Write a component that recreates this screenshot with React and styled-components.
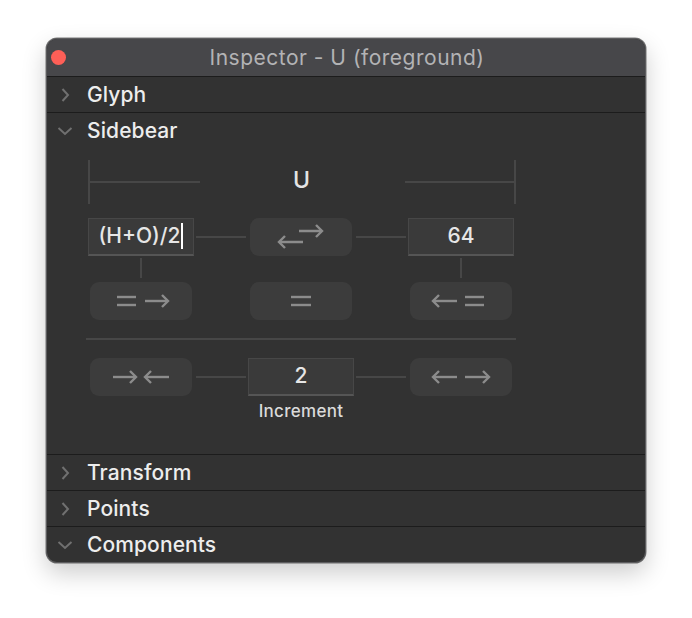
import React from 'react'
import styled, { createGlobalStyle } from 'styled-components'

const GlobalStyle = createGlobalStyle`
  html, body {
    margin: 0;
    padding: 0;
    background: #ffffff;
  }
  body {
    font-family: Inter, "Liberation Sans", sans-serif;
  }
`

const Page = styled.div`
  padding: 38px 46px 40px;
`

const Window = styled.div`
  width: 600px;
  box-sizing: border-box;
  border: 1px solid #5c5c5e;
  border-radius: 11px;
  background: #323232;
  overflow: hidden;
  display: flex;
  flex-direction: column;
  box-shadow: 0 10px 24px rgba(0, 0, 0, 0.2), 0 0 0 0.5px rgba(0, 0, 0, 0.5);
`

const TitleBar = styled.div`
  position: relative;
  height: 37px;
  background: #47474a;
  border-bottom: 1px solid #1c1c1c;
  display: flex;
  align-items: center;
  justify-content: center;
`

const CloseDot = styled.span`
  position: absolute;
  left: 4px;
  top: 11px;
  width: 15px;
  height: 15px;
  border-radius: 50%;
  background: #fe5f57;
`

const Title = styled.div`
  color: #b3b3b5;
  font-size: 21px;
  letter-spacing: 0.5px;
  margin-left: 2px;
`

const Header = styled.div`
  height: 35px;
  display: flex;
  align-items: center;
  padding-left: 10px;
  gap: 14px;
  border-top: ${p => (p.$first ? 'none' : '1px solid #1c1c1c')};
  color: #ededed;
  font-size: 21px;
  font-weight: 500;
  letter-spacing: 0.1px;
`

const Chevron = ({ open }) => (
  <svg width="16" height="16" viewBox="0 0 16 16">
    {open ? (
      <path d="M1.5 5 L8 11 L14.5 5" fill="none" stroke="#707070" strokeWidth="2" />
    ) : (
      <path d="M5.5 2 L11 8 L5.5 14" fill="none" stroke="#707070" strokeWidth="2" />
    )}
  </svg>
)

const Body = styled.div`
  height: 306px;
  box-sizing: border-box;
  padding: 12px 0 0 41px;
  display: flex;
  flex-direction: column;
`

const Ruler = styled.div`
  width: 428px;
  height: 44px;
  display: flex;
  align-items: center;
  justify-content: space-between;
`

const RulerArm = styled.div`
  height: 100%;
  width: ${p => p.$w}px;
  box-sizing: border-box;
  ${p => (p.$side === 'left' ? 'border-left' : 'border-right')}: 2px solid #474747;
  display: flex;
  align-items: center;

  &::after {
    content: '';
    flex: 1;
    height: 2px;
    background: #474747;
  }
`

const GlyphName = styled.div`
  color: #e4e4e4;
  font-size: 23px;
  font-weight: 500;
  margin-top: -4px;
  margin-right: 2px;
`

const Row = styled.div`
  display: grid;
  grid-template-columns: 106px 54px 106px 54px 106px;
  height: 38px;
  align-items: center;
  justify-items: center;
  margin-top: ${p => p.$mt || 0}px;
`

const Field = styled.div`
  width: 106px;
  height: 38px;
  box-sizing: border-box;
  background: #3a3a3a;
  border: 1px solid #474747;
  border-bottom: 2px solid #555555;
  color: #e6e6e6;
  font-size: 21px;
  font-weight: 500;
  display: flex;
  align-items: center;
  justify-content: center;
  padding-bottom: 2px;
`

const Caret = styled.span`
  display: inline-block;
  width: 2px;
  height: 26px;
  background: #ffffff;
  margin-left: 1px;
`

const Button = styled.div`
  width: 102px;
  height: 38px;
  border-radius: 9px;
  background: #3c3c3c;
  display: flex;
  align-items: center;
  justify-content: center;
`

const Link = styled.div`
  width: 50px;
  height: 2px;
  background: #474747;
`

const Ticks = styled.div`
  display: grid;
  grid-template-columns: 106px 54px 106px 54px 106px;
  height: 26px;
  justify-items: center;
  align-items: start;
`

const Tick = styled.div`
  grid-column: ${p => p.$col};
  width: 2px;
  height: 20px;
  margin-top: 2px;
  background: #474747;
`

const Divider = styled.div`
  width: 430px;
  height: 2px;
  margin: 18px 0 18px -2px;
  background: #474747;
`

const Label = styled.div`
  width: 426px;
  text-align: center;
  color: #dadada;
  font-size: 17px;
  font-weight: 500;
  letter-spacing: 0.3px;
  margin-top: 5px;
`

const stroke = '#8c8c8c'

const arrow = (x0, x1, y, dir) => {
  const tip = dir === 'r' ? x1 : x0
  const back = dir === 'r' ? tip - 6 : tip + 6
  return (
    <g key={`${x0}-${y}-${dir}`}>
      <path d={`M${x0} ${y} H${x1}`} />
      <path d={`M${back} ${y - 6} L${tip} ${y} L${back} ${y + 6}`} />
    </g>
  )
}

const equals = (x0, x1) => (
  <g key={`eq-${x0}`}>
    <path d={`M${x0} -4 H${x1}`} />
    <path d={`M${x0} 4 H${x1}`} />
  </g>
)

const icons = {
  swap: [arrow(-2, 21, -6, 'r'), arrow(-22, 2, 5, 'l')],
  eqRight: [equals(-24, -5), arrow(4, 27, 0, 'r')],
  equals: [equals(-10, 10)],
  leftEq: [arrow(-28, -4, 0, 'l'), equals(4, 23)],
  inward: [arrow(-28, -5, 0, 'r'), arrow(4, 28, 0, 'l')],
  outward: [arrow(-28, -4, 0, 'l'), arrow(4, 28, 0, 'r')],
}

const Icon = ({ name }) => (
  <svg width="64" height="26" viewBox="-32 -13 64 26" fill="none" stroke={stroke} strokeWidth="2.4">
    {icons[name]}
  </svg>
)

const sections = ['Transform', 'Points', 'Components']

export default function App() {
  return (
    <>
      <GlobalStyle />
      <Page>
        <Window>
          <TitleBar>
            <CloseDot />
            <Title>Inspector - U (foreground)</Title>
          </TitleBar>
          <Header $first>
            <Chevron />
            Glyph
          </Header>
          <Header>
            <Chevron open />
            Sidebear
          </Header>
          <Body>
            <Ruler>
              <RulerArm $side="left" $w={112} />
              <GlyphName>U</GlyphName>
              <RulerArm $side="right" $w={111} />
            </Ruler>
            <Row $mt={14}>
              <Field>
                (H+O)/2
                <Caret />
              </Field>
              <Link />
              <Button>
                <Icon name="swap" />
              </Button>
              <Link />
              <Field>64</Field>
            </Row>
            <Ticks>
              <Tick $col={1} />
              <Tick $col={5} />
            </Ticks>
            <Row>
              <Button>
                <Icon name="eqRight" />
              </Button>
              <span />
              <Button>
                <Icon name="equals" />
              </Button>
              <span />
              <Button>
                <Icon name="leftEq" />
              </Button>
            </Row>
            <Divider />
            <Row>
              <Button>
                <Icon name="inward" />
              </Button>
              <Link />
              <Field>2</Field>
              <Link />
              <Button>
                <Icon name="outward" />
              </Button>
            </Row>
            <Label>Increment</Label>
          </Body>
          {sections.map(name => (
            <Header key={name}>
              <Chevron open={name === 'Components'} />
              {name}
            </Header>
          ))}
        </Window>
      </Page>
    </>
  )
}
